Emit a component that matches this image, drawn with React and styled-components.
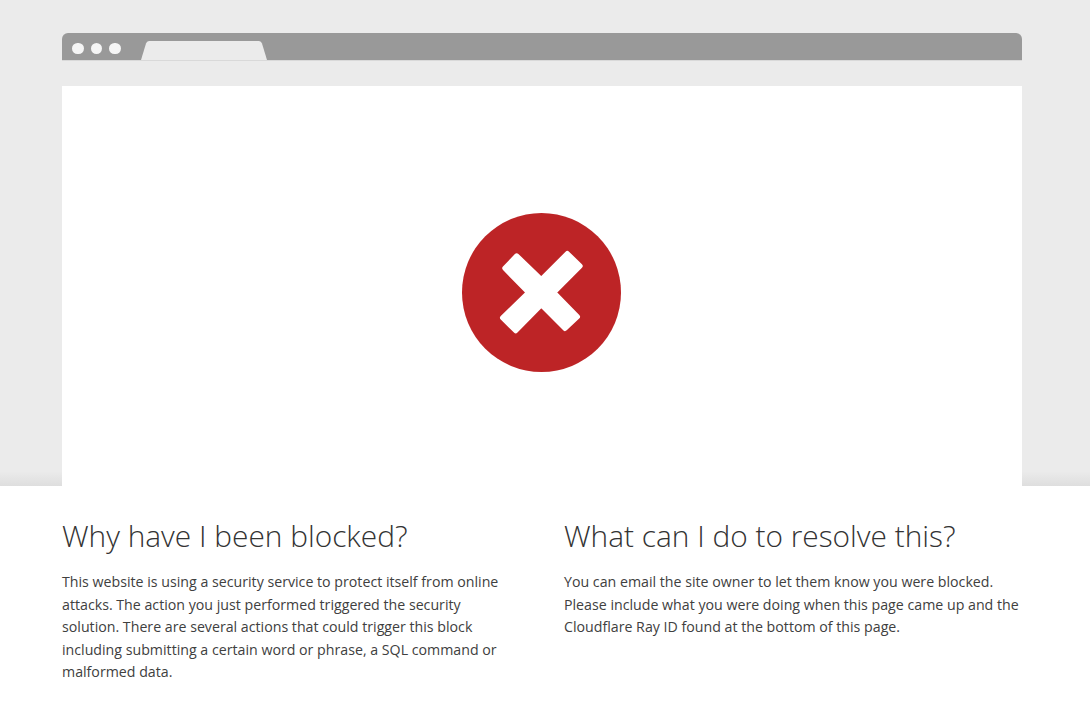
import styled, { createGlobalStyle } from "styled-components";

const GlobalStyle = createGlobalStyle`
  html, body {
    margin: 0;
    padding: 0;
    background: #fff;
  }
  body {
    font-family: "Open Sans", "Noto Sans", sans-serif;
    color: #404040;
    overflow: hidden;
  }
`;

//styling

const Hero = styled.section`
  height: 486px;
  box-sizing: border-box;
  padding-top: 33px;
  background: linear-gradient(to top, #dedede, #ebebeb 3%);
`;

const Container = styled.div`
  width: 960px;
  margin-left: 62px;
`;

const BrowserBar = styled.div`
  display: flex;
  align-items: flex-start;
  height: 27px;
  border-radius: 6px 6px 0 0;
  background: #999;
  border-bottom: 1px solid #d9d9d9;
`;

const Dots = styled.div`
  display: flex;
  gap: 7px;
  padding: 9.5px 0 0 10px;
`;

const Dot = styled.span`
  width: 11.6px;
  height: 11.6px;
  border-radius: 50%;
  background: #f5f5f5;
`;

const Tab = styled.svg`
  display: block;
  width: 126px;
  height: 19px;
  margin: 8px 0 0 20px;
`;

const Viewport = styled.div`
  display: flex;
  justify-content: center;
  align-items: center;
  height: 388px;
  margin-top: 25px;
  padding: 12px 2px 0 0;
  background: #fff;
`;

const ErrorIcon = styled.svg`
  display: block;
  width: 159px;
  height: 159px;
`;

const Details = styled.section`
  display: grid;
  grid-template-columns: 458px 458px;
  column-gap: 44px;
  width: 960px;
  margin-left: 62px;
  padding-top: 30px;
`;

const Heading = styled.h2`
  margin: 0 0 15px;
  font-size: 29.85px;
  font-weight: 300;
  line-height: 40px;
  color: #333;
`;

const Body = styled.p`
  margin: 0;
  font-size: 14.2px;
  line-height: 22.5px;
  color: #404040;
`;

export default function App() {
  return (
    <>
      <GlobalStyle />
      <Hero>
        <Container>
          <BrowserBar>
            <Dots>
              <Dot />
              <Dot />
              <Dot />
            </Dots>
            <Tab viewBox="0 0 126 19">
              <path
                d="M0 19 L5 2.5 Q5.8 0 8 0 L118 0 Q120.2 0 121 2.5 L126 19 Z"
                fill="#ebebeb"
              />
            </Tab>
          </BrowserBar>
          <Viewport>
            <ErrorIcon viewBox="0 0 159 159">
              <circle cx="79.5" cy="79.5" r="79.5" fill="#bd2426" />
              <path
                d="M42.8 55.3 L54.7 42.8 L79.3 66.5 L105.3 40.5 L118.2 53 L91.8 79.5 L115.5 103.7 L103 115.5 L79.3 91.8 L53.7 117.8 L40.5 104.7 L66.5 79.5 Z"
                fill="#fff"
                stroke="#fff"
                strokeWidth="5"
                strokeLinejoin="round"
              />
            </ErrorIcon>
          </Viewport>
        </Container>
      </Hero>
      <Details>
        <div>
          <Heading>Why have I been blocked?</Heading>
          <Body>
            This website is using a security service to protect itself from online
            attacks. The action you just performed triggered the security
            solution. There are several actions that could trigger this block
            including submitting a certain word or phrase, a SQL command or
            malformed data.
          </Body>
        </div>
        <div>
          <Heading>What can I do to resolve this?</Heading>
          <Body>
            You can email the site owner to let them know you were blocked.
            Please include what you were doing when this page came up and the
            Cloudflare Ray ID found at the bottom of this page.
          </Body>
        </div>
      </Details>
    </>
  );
}
